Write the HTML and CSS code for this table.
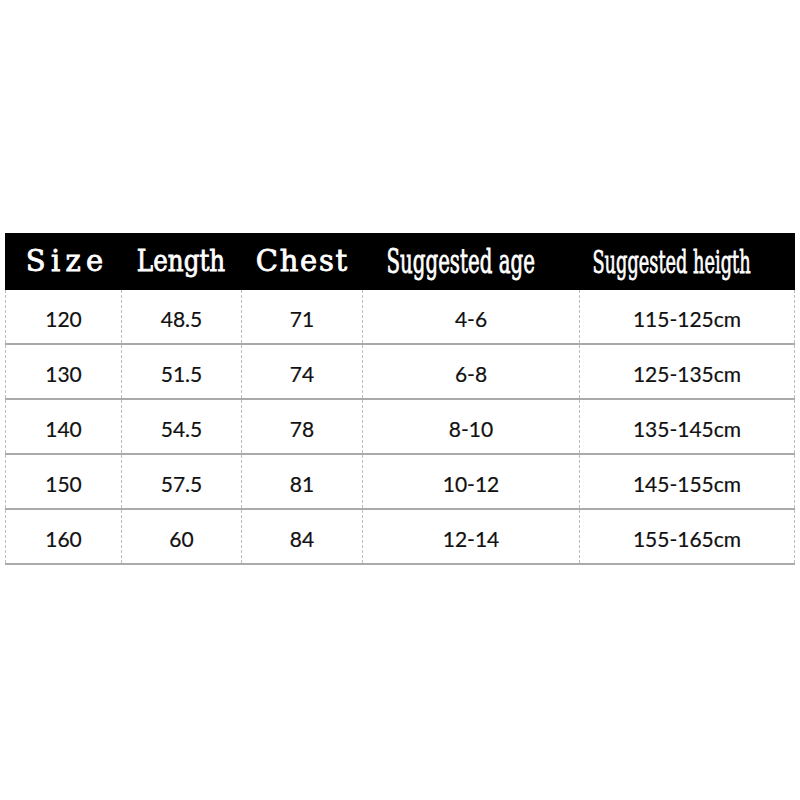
FILE: index.html
```html
<!DOCTYPE html>
<html lang="en">
<head>
<meta charset="utf-8">
<title>Size chart</title>
<link rel="stylesheet" href="styles.css">
</head>
<body>
<div class="chart">
  <div class="head">
    <div class="hcell"><span class="ht ht-size">Size</span></div>
    <div class="hcell"><span class="ht ht-length">Length</span></div>
    <div class="hcell"><span class="ht ht-chest">Chest</span></div>
    <div class="hcell hcell-age"><span class="ht ht-age">Suggested age</span></div>
    <div class="hcell hcell-height"><span class="ht ht-height">Suggested heigth</span></div>
  </div>
  <div class="row"><div class="cell">120</div><div class="cell">48.5</div><div class="cell">71</div><div class="cell">4-6</div><div class="cell last">115-125cm</div></div>
  <div class="row"><div class="cell">130</div><div class="cell">51.5</div><div class="cell">74</div><div class="cell">6-8</div><div class="cell last">125-135cm</div></div>
  <div class="row"><div class="cell">140</div><div class="cell">54.5</div><div class="cell">78</div><div class="cell">8-10</div><div class="cell last">135-145cm</div></div>
  <div class="row"><div class="cell">150</div><div class="cell">57.5</div><div class="cell">81</div><div class="cell">10-12</div><div class="cell last">145-155cm</div></div>
  <div class="row"><div class="cell">160</div><div class="cell">60</div><div class="cell">84</div><div class="cell">12-14</div><div class="cell last">155-165cm</div></div>
</div>
</body>
</html>
```
FILE: styles.css
```css
html, body {
  margin: 0;
  padding: 0;
  background: #ffffff;
}

.chart {
  margin: 233px 0 0 5px;
  width: 790px;
}

.head,
.row {
  display: grid;
  grid-template-columns: 116px 120px 121px 217px 216px;
}

.head {
  height: 57px;
  background: #000000;
  color: #ffffff;
}

.hcell {
  display: flex;
  align-items: center;
  justify-content: center;
  white-space: nowrap;
}

.hcell-age { padding-right: 20px; }
.hcell-height { padding-right: 31px; }

.ht {
  display: inline-block;
  font-family: "DejaVu Serif", "Liberation Serif", serif;
  font-size: 29px;
  line-height: 1;
  -webkit-text-stroke: 0.8px #ffffff;
  transform-origin: center center;
}

.ht-size {
  letter-spacing: 5.3px;
  padding-left: 5.3px;
  margin-left: 3px;
}
.ht-length { transform: scaleX(0.85); }
.ht-chest {
  letter-spacing: 1.75px;
  padding-left: 1.75px;
}
.ht-age {
  font-size: 33px;
  transform: scaleX(0.6);
}
.ht-height {
  font-size: 32px;
  transform: scaleX(0.555);
}

.row {
  height: 55px;
  box-sizing: border-box;
  border-bottom: 2px solid #aaaaaa;
}

.cell {
  display: flex;
  align-items: center;
  justify-content: center;
  padding-top: 3px;
  border-left: 1px dashed #bdbdbd;
  font-family: Lato, "Open Sans", sans-serif;
  font-size: 21px;
  color: #111111;
  -webkit-text-stroke: 0.2px #111111;
}

.cell.last {
  border-right: 1px dashed #bdbdbd;
}
```
